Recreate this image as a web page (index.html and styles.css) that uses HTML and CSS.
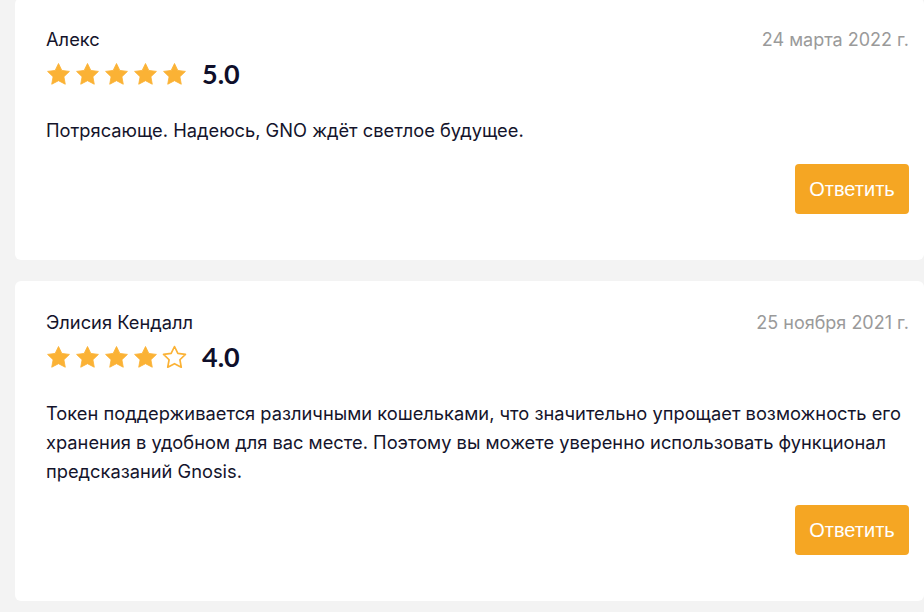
FILE: index.html
```html
<!DOCTYPE html>
<html lang="ru">
<head>
<meta charset="utf-8">
<title>Отзывы</title>
<link rel="stylesheet" href="styles.css">
</head>
<body>
<svg width="0" height="0" class="defs">
  <defs>
    <path id="star" d="M12 1.4l3.2 6.6 7.3 1-5.3 5.1 1.3 7.2L12 17.9l-6.5 3.4 1.3-7.2-5.3-5.1 7.3-1z" stroke-linejoin="round"/>
  </defs>
</svg>
<div class="reviews">
  <article class="card">
    <header class="card-head">
      <span class="name">Алекс</span>
      <span class="date">24 марта 2022 г.</span>
    </header>
    <div class="rating">
      <div class="stars">
        <svg class="star full" viewBox="0 0 24 22"><use href="#star"/></svg>
        <svg class="star full" viewBox="0 0 24 22"><use href="#star"/></svg>
        <svg class="star full" viewBox="0 0 24 22"><use href="#star"/></svg>
        <svg class="star full" viewBox="0 0 24 22"><use href="#star"/></svg>
        <svg class="star full" viewBox="0 0 24 22"><use href="#star"/></svg>
      </div>
      <span class="score">5.0</span>
    </div>
    <p class="text">Потрясающе. Надеюсь, GNO ждёт светлое будущее.</p>
    <div class="actions"><button class="reply">Ответить</button></div>
  </article>
  <article class="card">
    <header class="card-head">
      <span class="name">Элисия Кендалл</span>
      <span class="date">25 ноября 2021 г.</span>
    </header>
    <div class="rating">
      <div class="stars">
        <svg class="star full" viewBox="0 0 24 22"><use href="#star"/></svg>
        <svg class="star full" viewBox="0 0 24 22"><use href="#star"/></svg>
        <svg class="star full" viewBox="0 0 24 22"><use href="#star"/></svg>
        <svg class="star full" viewBox="0 0 24 22"><use href="#star"/></svg>
        <svg class="star empty" viewBox="0 0 24 22"><use href="#star"/></svg>
      </div>
      <span class="score">4.0</span>
    </div>
    <p class="text">Токен поддерживается различными кошельками, что значительно упрощает возможность его хранения в удобном для вас месте. Поэтому вы можете уверенно использовать функционал предсказаний Gnosis.</p>
    <div class="actions"><button class="reply">Ответить</button></div>
  </article>
</div>
</body>
</html>
```
FILE: styles.css
```css
html, body {
  margin: 0;
  padding: 0;
}
body {
  background: #f3f3f3;
  font-family: Inter, Roboto, "Liberation Sans", Arial, sans-serif;
  color: #14142b;
  overflow: hidden;
}
.defs {
  position: absolute;
}
.reviews {
  display: flex;
  flex-direction: column;
  gap: 21px;
  margin-top: -2px;
  padding-left: 15px;
}
.card {
  background: #fff;
  border-radius: 6px;
  padding: 29px 15px 46px 31px;
}
.card-head {
  display: flex;
  justify-content: space-between;
  align-items: baseline;
  height: 24px;
}
.name {
  font-size: 18.3px;
  line-height: 24px;
}
.date {
  font-size: 18px;
  line-height: 24px;
  color: #9a9a9a;
}
.rating {
  display: flex;
  align-items: center;
  margin-top: 8px;
  height: 28px;
}
.stars {
  display: flex;
  gap: 4px;
}
.star {
  width: 25px;
  height: 23px;
  display: block;
}
.star.full {
  fill: #fbb235;
  stroke: #fbb235;
  stroke-width: 0.8;
}
.star.empty {
  fill: none;
  stroke: #fbb235;
  stroke-width: 1.6;
}
.score {
  font-family: Lato, sans-serif;
  font-weight: 700;
  font-size: 27px;
  margin-left: 15px;
  color: #0f0f2a;
}
.text {
  font-size: 18.3px;
  line-height: 29px;
  margin: 29px 0 0;
}
.actions {
  display: flex;
  justify-content: flex-end;
  margin-top: 19px;
}
.reply {
  width: 114px;
  height: 50px;
  border: none;
  border-radius: 4px;
  background: #f5a623;
  color: #fff;
  font-family: "Liberation Sans", Arial, sans-serif;
  font-size: 20px;
  cursor: pointer;
}
```
